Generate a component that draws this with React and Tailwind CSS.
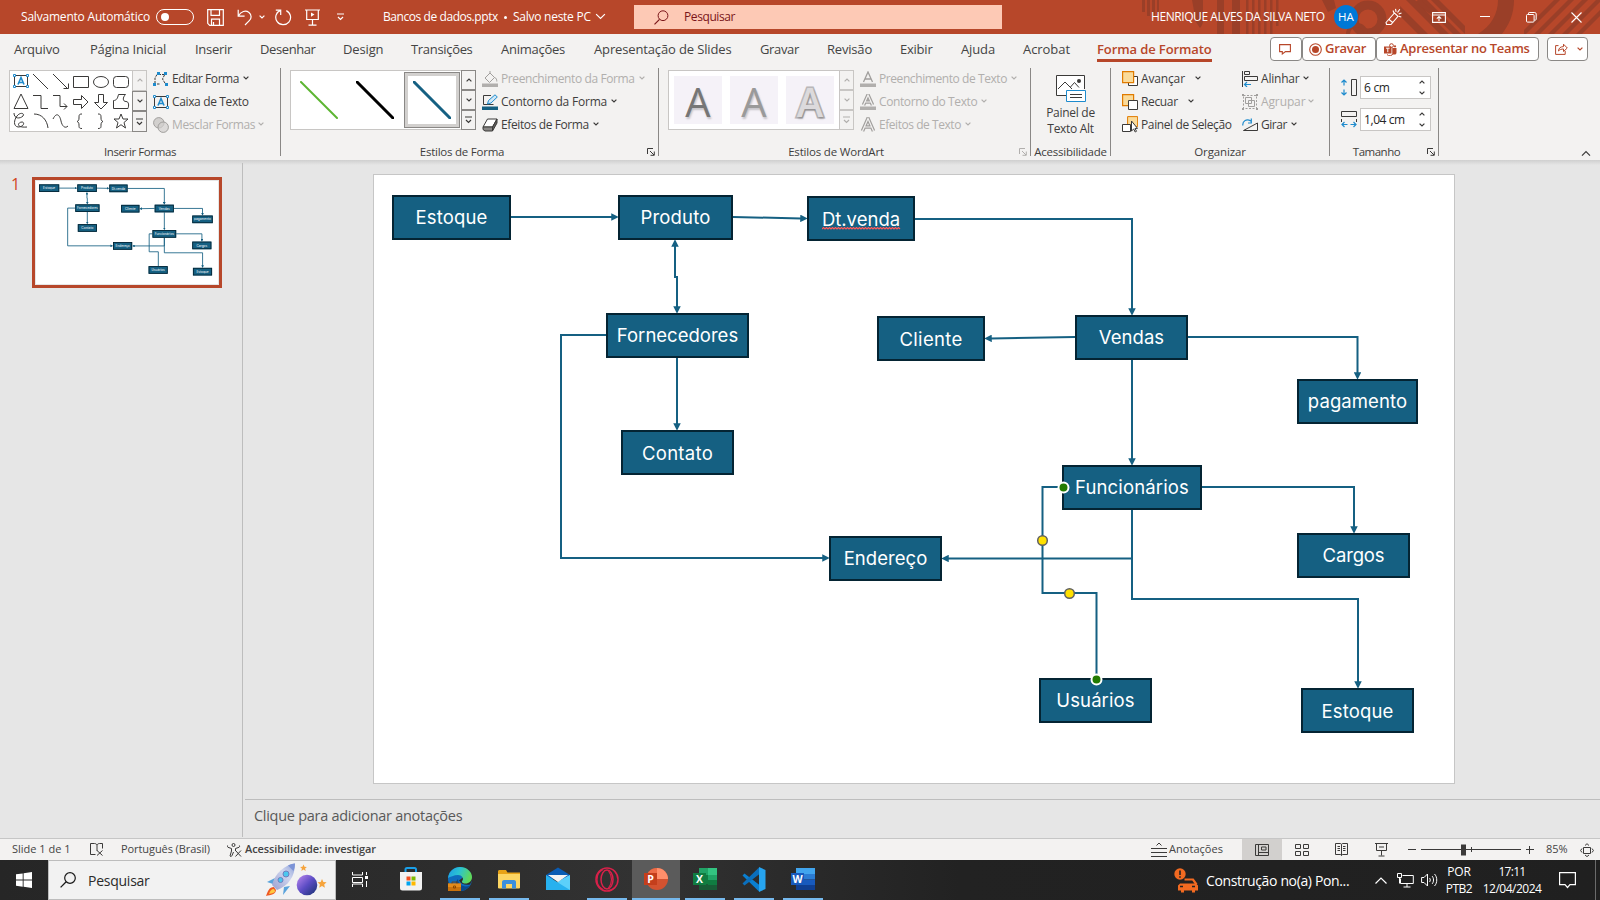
import React from 'react';

const INK = '#3b3a39';
const BLUE = '#1e8bcd';
const RED = '#b7472a';

function Svg({ w, h, vb, className = '', children }) {
  return (
    <svg width={w} height={h} viewBox={vb || `0 0 ${w} ${h}`} fill="none" className={`shrink-0 ${className}`}>
      {children}
    </svg>
  );
}

const Chevron = ({ color = INK, w = 6, up = false, className = '' }) => (
  <Svg w={w} h={w * 0.67} vb="0 0 6 4" className={className}>
    <path d={up ? 'M.6 3.4 3 1l2.4 2.4' : 'M.6.6 3 3 5.4.6'} stroke={color} strokeWidth={7.2 / w} />
  </Svg>
);

/* ---------- Title bar ---------- */

const TitleArt = () => (
  <Svg w={480} h={34}>
    <g fill="#9a3f28">
      <path d="M22 0h3v12h-3zM27 0h3v16h-3zM32 0h3v17h-3zM37 0h2v14h-2z" />
      <path d="M97 0h7v34h-7zM72 0h11v20a11 11 0 0 1-3 8l-4-6z" />
      <path d="M112 0h8v34h-8zM126 0h2.500v34h-2.500zM132 0h2.500v34h-2.500zM138 0h2.500v34h-2.500zM144 0h2.500v34h-2.500zM150 0h2.500v34h-2.500zM156 0h2.500v26h-2.500z" />
      <path d="M202 0h12l2 8-8 4zM286 0h9l34 34h-9zM299 0h8l34 34h-8zM311 0h8l26 26v8zM280 6l28 28h-10l-18-18z" />
      <path d="M378 0h16c0 14-5 25-12 34h-24c13-8 20-20 20-34z" />
      <path d="M404 30l30-30h6l-34 34h-2zM414 34l34-34h6l-34 34zM428 34l34-34h6l-34 34zM442 34l34-34h4v2l-32 32zM456 34l24-24v6l-18 18z" />
    </g>
    <circle cx="248" cy="19" r="14" stroke="#9a3f28" strokeWidth="9" />
    <circle cx="237" cy="34" r="9" stroke="#9a3f28" strokeWidth="4" />
    <path d="M298 0a44 44 0 0 0 18 14" stroke="#9a3f28" strokeWidth="5" />
  </Svg>
);

const TitleBar = () => (
  <header className="relative flex h-[34px] shrink-0 items-center bg-[#b7472a] text-[12px] text-white">
    <div className="absolute right-0 top-0"><TitleArt /></div>
    <span className="relative ml-[21px] w-[135px] tracking-[-0.2px]">Salvamento Automático</span>
    <div className="relative flex h-4 w-[38px] items-center rounded-full border border-white pl-[4px]">
      <div className="h-2 w-2 rounded-full bg-white" />
    </div>
    <Svg w={17} h={17} className="relative ml-[13px] mt-px">
      <path d="M.7.7h15.600v15.600H2.700L.7 14.300zM4 .7v5.600h8.500V.7M4.500 16.200v-6h8v6M6.500 16v-3" stroke="#fff" strokeWidth="1.200" />
    </Svg>
    <Svg w={16} h={17} className="relative ml-[13px]">
      <path d="M1.200.8v6.400h6.400M1.300 7C4 2.500 8.500.800 12 3.500c3 2.500 2.500 6 .3 8.200L8 16" stroke="#fff" strokeWidth="1.200" />
    </Svg>
    <Chevron color="#fff" className="relative ml-[6px]" />
    <Svg w={17} h={17} className="relative ml-[10px]">
      <path d="M.8 1.200h4.900V6M5.500 1.400A7.400 7.400 0 1 0 11.300 1.600" stroke="#fff" strokeWidth="1.200" />
    </Svg>
    <Svg w={15} h={17} className="relative ml-[13px]">
      <path d="M0 1h15M1.700 1v9.500h11.600V1M7.500 10.500V16M3.500 16.200h8" stroke="#fff" strokeWidth="1.200" />
      <path d="M6 3.500v4.300L9.500 5.600z" fill="#fff" />
    </Svg>
    <Svg w={7} h={8} className="relative ml-[17px]">
      <path d="M0 1h7M1 4l2.500 2.500L6 4" stroke="#fff" strokeWidth="1.200" />
    </Svg>
    <span className="ml-[39px] w-[121px] tracking-[-0.43px]">Bancos de dados.pptx</span>
    <span className="h-[3px] w-[3px] rounded-full bg-white" />
    <span className="ml-[6px] w-[82px] tracking-[-0.26px]">Salvo neste PC</span>
    <Chevron color="#fff" w={11} />
    <div className="ml-[28px] flex h-6 w-[368px] items-center bg-[#fdc9b5] text-[#7a1519]">
      <Svg w={15} h={15} className="ml-5">
        <circle cx="9" cy="5.700" r="4.900" stroke="#7a1519" /><path d="M5.500 9.300.5 14.300" stroke="#7a1519" strokeWidth="1.200" />
      </Svg>
      <span className="ml-[15px] tracking-[-0.41px]">Pesquisar</span>
    </div>
    <span className="relative ml-[149px] w-[183px] whitespace-nowrap tracking-[-0.43px]">HENRIQUE ALVES DA SILVA NETO</span>
    <span className="relative flex h-6 w-6 items-center justify-center rounded-full bg-[#0078d7] text-[11.5px]">HA</span>
    <Svg w={17} h={18} className="relative ml-[27px]">
      <path d="M1 14.500 9.500 5l3.500 3.300L6 16.500H1.500zM4 11.500l4 3.200M8 2.500 9 5M10.500.8l.6 3M14.800 1.200 12.500 4.500M16.500 5l-2.800 1M16.300 9l-2.500-.8" stroke="#fff" strokeWidth="1.100" />
    </Svg>
    <Svg w={14} h={11} className="relative ml-[30px]">
      <path d="M.6.6h12.800v9.800H.6zM.6 3h12.800M7 9V4.800M4.800 6.700 7 4.600l2.200 2.100" stroke="#fff" strokeWidth="1.100" />
    </Svg>
    <Svg w={10} h={2} className="relative ml-[34px]"><path d="M0 .5h10" stroke="#fff" /></Svg>
    <Svg w={11} h={11} className="relative ml-[36px]">
      <rect x=".5" y="2.500" width="7.600" height="7.600" rx="1" stroke="#fff" /><path d="M2.500 2.300V1.200c0-.4.300-.7.700-.7h5.600c.8 0 1.400.6 1.400 1.400v5.400c0 .5-.3.800-.8.800H8.300" stroke="#fff" />
    </Svg>
    <Svg w={11} h={11} className="relative ml-[34px]"><path d="m.5.5 10 10M10.500.5l-10 10" stroke="#fff" strokeWidth="1.100" /></Svg>
  </header>
);

/* ---------- Tabs ---------- */

const TABS = [
  ['Arquivo', 'ml-[14px] w-[76px] tracking-[-0.22px]'],
  ['Página Inicial', 'w-[105px] tracking-[-0.2px]'],
  ['Inserir', 'w-[65px] tracking-[-0.29px]'],
  ['Desenhar', 'w-[83px] tracking-[-0.4px]'],
  ['Design', 'w-[68px] tracking-[-0.13px]'],
  ['Transições', 'w-[90px] tracking-[-0.32px]'],
  ['Animações', 'w-[93px] tracking-[-0.25px]'],
  ['Apresentação de Slides', 'w-[166px] tracking-[-0.14px]'],
  ['Gravar', 'w-[67px] tracking-[-0.34px]'],
  ['Revisão', 'w-[73px] tracking-[-0.19px]'],
  ['Exibir', 'w-[61px] tracking-[-0.23px]'],
  ['Ajuda', 'w-[62px] tracking-[-0.13px]'],
  ['Acrobat', 'w-[74px] tracking-[-0.06px]'],
];

const PILL = 'flex h-6 items-center rounded-[4px] border border-[#8a8886] bg-white';

const TabBar = () => (
  <nav className="flex h-7 shrink-0 items-center bg-[#f3f2f1] text-[13px] text-[#444]">
    {TABS.map(([t, c]) => (
      <span key={t} className={`mt-[3px] shrink-0 whitespace-nowrap ${c}`}>{t}</span>
    ))}
    <span className="mt-[3px] flex h-[25px] w-[115px] shrink-0 items-center whitespace-nowrap border-b-[3px] border-[#b7472a] pt-[3px] font-semibold tracking-[-0.1px] text-[#b7472a]">Forma de Formato</span>
    <div className="ml-[58px] mt-[2px] flex text-[13px] font-semibold text-[#b7472a]">
      <div className={`${PILL} w-8 pl-[8px]`}>
        <Svg w={12} h={11}><path d="M.6.6h10.800v7H6.500L3.300 10V7.600H.6z" stroke={RED} strokeWidth="1.100" /></Svg>
      </div>
      <div className={`${PILL} w-[74px] pl-[6px]`}>
        <Svg w={13} h={13}><circle cx="6.500" cy="6.500" r="5.800" stroke={RED} strokeWidth="1.100" /><circle cx="6.500" cy="6.500" r="3.500" fill={RED} /></Svg>
        <span className="ml-[3px] tracking-[-0.28px]">Gravar</span>
      </div>
      <div className={`${PILL} w-[163px] pl-[7px]`}>
        <Svg w={13} h={13}>
          <circle cx="7.500" cy="2.600" r="1.900" stroke={RED} /><circle cx="11" cy="3.300" r="1.100" fill={RED} />
          <path d="M0 3.500h7.500v7H0zM8.500 5h4v4.500a2 2 0 0 1-2.500 2H8.500z" fill={RED} /><path d="M2 5.200h3.600M3.800 5.200v4" stroke="#fff" /><path d="M3 11.500a3.500 3.500 0 0 0 6-1V5" stroke={RED} />
        </Svg>
        <span className="ml-[3px] whitespace-nowrap tracking-[-0.24px]">Apresentar no Teams</span>
      </div>
      <div className={`${PILL} ml-[8px] w-[41px] pl-[7px]`}>
        <Svg w={13} h={12}><path d="M3.500 2.600H.6v8.800h9.600V8M3.500 8c.2-3 2-4.300 5-4.400V1.200L12.300 5 8.500 8.500V6C6.500 6 4.800 6.500 3.500 8z" stroke={RED} /></Svg>
        <Chevron color={RED} className="ml-[9px]" />
      </div>
    </div>
  </nav>
);

/* ---------- Ribbon ---------- */

const Item = ({ icon, label, className = '', chevron = 'ml-[4px]', dim, gap = 'ml-[3px]' }) => (
  <div className={`flex h-[23px] items-center whitespace-nowrap ${dim ? 'text-[#b1afad]' : ''}`}>
    {icon}
    <span className={`${gap} ${className}`}>{label}</span>
    {chevron && <Chevron color={dim ? '#b1afad' : INK} className={chevron} />}
  </div>
);

const Launcher = ({ dim }) => (
  <Svg w={8} h={8} className="ml-[4px] mr-[3px]">
    <path d="M.5 6V.5H6M3 3l4 4M7.300 3.500v3.800H3.500" stroke={dim ? '#b1afad' : INK} />
  </Svg>
);

const Group = ({ width, label, track, launcher, children }) => (
  <>
    <section className={`flex shrink-0 flex-col ${width}`}>
      <div className="flex h-[82px]">{children}</div>
      <div className="flex h-4 items-center text-[11.5px]">
        <span className={`flex-1 whitespace-nowrap text-center ${track}`}>{label}</span>
        {launcher && <Launcher dim={launcher === 'dim'} />}
      </div>
    </section>
    <div className="mt-[6px] h-[88px] w-px shrink-0 bg-[#8a8886]" />
  </>
);

const Scroller = ({ dim, firstDim, h = 'h-[62px]' }) => {
  const color = dim ? '#b1afad' : INK;
  const line = dim ? 'border-[#c8c6c4]' : 'border-[#8a8886]';
  return (
    <div className={`flex w-[15px] shrink-0 flex-col bg-[#f3f2f1] ${h}`}>
      <div className={`flex flex-1 items-center justify-center border ${firstDim ? 'border-[#c8c6c4]' : line}`}><Chevron up color={firstDim ? '#b1afad' : color} /></div>
      <div className={`flex flex-1 items-center justify-center border ${line}`}><Chevron color={color} /></div>
      <div className={`flex flex-1 items-center justify-center border ${line}`}>
        <Svg w={7} h={8}><path d="M0 1h7M1 4l2.500 2.500L6 4" stroke={color} strokeWidth="1.200" /></Svg>
      </div>
    </div>
  );
};

const ShapeGallery = () => (
  <div className="ml-[9px] mt-[8px] flex h-[62px] w-[138px] bg-white">
    <div className="h-full w-[123px] border border-r-0 border-[#c8c6c4]">
      <Svg w={122} h={60}>
        <g stroke={INK} strokeWidth="1">
          <path d="M4.500 4.500h13v11h-13z" />
          <path d="m23 3 15 15M43 3l14 14M58.500 12.500v5h-5" />
          <path d="M63.500 5.500h15v11h-15z" />
          <ellipse cx="91" cy="11" rx="7.500" ry="5.500" />
          <rect x="103.500" y="5.500" width="15" height="11" rx="3" />
          <path d="M4 37.500 11 23l7 14.500zM23 24.500h8v13h7M43 24.500h7v11h7M54 32.500l3 3-3 3" />
          <path d="M63.500 28.500h8v-4l6.500 6.500-6.500 6.500v-4h-8zM88.500 23.500h5v8h4L91 38l-6.500-6.500h4z" />
          <path d="M103.500 37.500v-8c3 0 4-2 5-6h7c-3 3-3 7 .5 7 3 0 3 4 2 7z" />
          <path d="M4 42c0 6 6 6 9 3 2-3-3-4-6 0s-4 10 1 11c6 0 7-5 4-5-4 0-7 6 5 5M24 43c8 0 13 6 14 14M43 48c4-8 7-3 8 2s4 8 7 5" />
          <path d="M72 43c-3 0-3 1-3 4 0 2-.5 3-2 3.500 1.500.5 2 1.500 2 3.500 0 2.500 0 3.500 3 3.500M88 43c3 0 3 1 3 4 0 2 .5 3 2 3.500-1.500.5-2 1.500-2 3.500 0 2.500 0 3.500-3 3.500" />
          <path d="m111 43 2 5h5l-4 3.500 1.500 5.500-4.500-3.300-4.500 3.300 1.500-5.500-4-3.500h5z" />
        </g>
        <g fill="#fff" stroke={BLUE}><path d="M3.500 3.500h2v2h-2zM16.500 3.500h2v2h-2zM3.500 14.500h2v2h-2zM16.500 14.500h2v2h-2z" /></g>
        <path d="m8 13.500 3-7 3 7M9 11.500h4" stroke={BLUE} strokeWidth="1.600" />
      </Svg>
    </div>
    <Scroller firstDim />
  </div>
);

const EditShapeIcon = () => (
  <Svg w={16} h={14}>
    <path d="M4 2.500 2 6v5M5.500 2.500h6M11.500 3l-2 4 3 5M4 12h3" stroke={INK} strokeDasharray="2.500 1" />
    <path d="M4 0h3v3H4zM11 0h3v3h-3zM0 11h3v3H0zM12 11h3v3h-3z" fill={BLUE} />
  </Svg>
);
const TextBoxIcon = () => (
  <Svg w={16} h={14}>
    <path d="M1.500 1.500h13v11h-13z" stroke={INK} />
    <g fill="#fff" stroke={BLUE}><path d="M.5.5h2v2h-2zM13.500.5h2v2h-2zM.5 11.500h2v2h-2zM13.500 11.500h2v2h-2z" /></g>
    <path d="m5 10.500 3-7 3 7M6 8.500h4" stroke={BLUE} strokeWidth="1.600" />
  </Svg>
);
const MergeIcon = () => (
  <Svg w={16} h={16}>
    <circle cx="5.800" cy="5.800" r="5.200" stroke="#a19f9d" fill="#d2d0ce" /><circle cx="10.200" cy="10.200" r="5.200" stroke="#a19f9d" fill="#d2d0ce" fillOpacity=".7" />
  </Svg>
);
const FillIcon = () => (
  <Svg w={16} h={16}>
    <path d="m8 2-5 5 4.500 4.500 5-5zM8 2V0M12.500 6.500c2 .5 2.300 2.500 2.300 4" stroke="#a19f9d" /><path d="M0 12.500h16V16H0z" fill="#b1afad" />
  </Svg>
);
const OutlineIcon = () => (
  <Svg w={16} h={16}>
    <path d="M9 1.500H1.500v9h10" stroke={INK} /><path d="m5.500 10 1-3.500L13 .8l2.300 2.200L9 9z" fill="#cfe7f7" stroke={BLUE} /><path d="M0 12.500h16V16H0z" fill="#156082" />
  </Svg>
);
const EffectsIcon = () => (
  <Svg w={16} h={14}>
    <path d="m1 9 4.500-8H15l-4.500 8z" fill="#fff" stroke={INK} /><path d="M1 9v2.500L3 13h7.500V9z" fill="#8a8886" stroke={INK} /><path d="M10.500 13 15 5V1l-4.500 8z" fill="#605e5c" stroke={INK} />
  </Svg>
);

const LINE_STYLES = [
  ['#5cb531', 2, false],
  ['#000', 3, false],
  ['#156082', 3, true],
];

const ShapeStyleGallery = () => (
  <div className="ml-[9px] mt-[8px] flex h-[60px] w-[186px]">
    <div className="flex h-full w-[171px] items-center border border-r-0 border-[#c8c6c4] bg-white">
      {LINE_STYLES.map(([c, w, sel]) => (
        <div key={c} className={`flex h-[56px] w-14 shrink-0 items-center justify-center ${sel ? 'ml-px border border-[#8a8886] bg-[#d2d0ce]' : ''}`}>
          <div className="flex h-12 w-12 items-center justify-center bg-white">
            <Svg w={38} h={38}><path d="m1 1 36 36" stroke={c} strokeWidth={w} strokeLinecap="round" /></Svg>
          </div>
        </div>
      ))}
    </div>
    <Scroller h="h-[60px]" />
  </div>
);

const WORD_ART = [
  'font-medium text-[#767676]',
  'font-medium text-[#9a9a9a]',
  'font-semibold text-[#dcdadc] [-webkit-text-stroke:3px_#b9b7b9] [paint-order:stroke_fill]',
];

const WordArtGallery = () => (
  <div className="ml-[9px] mt-[8px] flex h-[60px] w-[186px]">
    <div className="flex h-full w-[171px] items-center gap-2 border border-r-0 border-[#c8c6c4] bg-white pl-[5px]">
      {WORD_ART.map((c) => (
        <div key={c} className="flex h-12 w-12 items-center justify-center bg-[#f5f2f8]">
          <span className={`mt-[4px] text-[40px] leading-none [text-shadow:1px_2px_2px_#0003] ${c}`}>A</span>
        </div>
      ))}
    </div>
    <Scroller dim firstDim h="h-[60px]" />
  </div>
);

const TextFillIcon = ({ outline, bar }) => (
  <Svg w={16} h={16}>
    <path d={bar ? 'M3.500 11 8 1l4.500 10M5 8h6' : 'M2.500 14 8 1.500 13.500 14M4.500 10h7'} stroke="#a19f9d" strokeWidth={outline ? 3.6 : 1.3} />
    {outline && <path d={bar ? 'M3.500 11 8 1l4.500 10M5 8h6' : 'M2.500 14 8 1.500 13.500 14M4.500 10h7'} stroke="#f3f2f1" strokeWidth="1.200" />}
    {bar && <path d="M0 12.500h16V16H0z" fill="#b1afad" />}
  </Svg>
);

const ForwardIcon = () => (
  <Svg w={16} h={16}><path d="M6.500 5.500h9v9h-9z" fill="#fff" stroke={INK} /><path d="M.6.600h11v11h-11z" fill="#fadb9a" stroke="#e07b00" strokeWidth="1.200" /></Svg>
);
const BackwardIcon = () => (
  <Svg w={16} h={16}><path d="M.6.600h11v11h-11z" fill="#fadb9a" stroke="#e07b00" strokeWidth="1.200" /><path d="M6.500 6.500h9v9h-9z" fill="#fff" stroke={INK} /></Svg>
);
const SelectionIcon = () => (
  <Svg w={16} h={17}>
    <path d="M5.600.600h10v10h-10z" fill="#fadb9a" stroke="#e07b00" /><path d="M.5 8.500h8v7h-8z" fill="#fff" stroke={INK} /><path d="M9.500 5v10l2.200-2 1.500 3 1.300-.7-1.500-2.900h2.500z" fill="#fff" stroke={INK} />
  </Svg>
);
const AlignIcon = () => (
  <Svg w={16} h={16}>
    <path d="M.5 0v16M2.500.5h5v3h-5zM2.500 5.500h13v4h-13z" stroke={INK} fill="none" /><path d="M9 13.500H2.500M5 11l-2.500 2.500L5 16" stroke={BLUE} strokeWidth="1.200" />
  </Svg>
);
const GroupIcon = () => (
  <Svg w={16} h={16}>
    <path d="M1.500 1.500h13v13h-13z" stroke="#a19f9d" strokeDasharray="2 1.500" /><path d="M3.500 3.500h6v6h-6zM6.500 6.500h6v6h-6z" stroke="#a19f9d" /><path d="M0 0h2v2H0zM14 0h2v2h-2zM0 14h2v2H0zM14 14h2v2h-2z" fill="#a19f9d" />
  </Svg>
);
const RotateIcon = () => (
  <Svg w={16} h={15}>
    <path d="M1.500 13.500h14V6z" stroke={INK} /><path d="M.8 8.500c-.5-5 4-7 8-4.500M6 6h3.300V1.500" stroke={BLUE} strokeWidth="1.200" />
  </Svg>
);

const SizeField = ({ icon, value, track }) => (
  <div className="flex items-center">
    {icon}
    <div className="ml-[3px] flex h-[23px] w-[71px] items-center border border-[#c8c6c4] bg-white pl-[3px] pr-[5px] text-[#262626]">
      <span className={`flex-1 ${track}`}>{value}</span>
      <div className="flex flex-col gap-[6px]"><Chevron up w={6} /><Chevron w={6} /></div>
    </div>
  </div>
);

const Ribbon = () => (
  <div className="flex h-[98px] shrink-0 bg-[#f3f2f1] text-[12px] text-[#3f3e3d]">
    <Group width="w-[280px]" label="Inserir Formas" track="tracking-[-0.4px]">
      <ShapeGallery />
      <div className="ml-[6px] mt-[5px]">
        <Item icon={<EditShapeIcon />} label="Editar Forma" className="tracking-[-0.42px]" />
        <Item icon={<TextBoxIcon />} label="Caixa de Texto" className="tracking-[-0.36px]" chevron={null} />
        <Item icon={<MergeIcon />} label="Mesclar Formas" className="tracking-[-0.38px]" chevron="ml-[3px]" dim />
      </div>
    </Group>
    <Group width="w-[377px]" label="Estilos de Forma" track="tracking-[-0.24px]" launcher>
      <ShapeStyleGallery />
      <div className="ml-[6px] mt-[5px]">
        <Item icon={<FillIcon />} label="Preenchimento da Forma" className="tracking-[-0.39px]" dim />
        <Item icon={<OutlineIcon />} label="Contorno da Forma" className="tracking-[-0.2px]" />
        <Item icon={<EffectsIcon />} label="Efeitos de Forma" className="tracking-[-0.39px]" />
      </div>
    </Group>
    <Group width="w-[371px]" label="Estilos de WordArt" track="tracking-[-0.18px] pr-[2px]" launcher="dim">
      <WordArtGallery />
      <div className="ml-[6px] mt-[5px]">
        <Item icon={<TextFillIcon bar />} label="Preenchimento de Texto" className="tracking-[-0.42px]" dim />
        <Item icon={<TextFillIcon bar outline />} label="Contorno do Texto" className="tracking-[-0.4px]" dim />
        <Item icon={<TextFillIcon outline />} label="Efeitos de Texto" className="tracking-[-0.45px]" dim />
      </div>
    </Group>
    <Group width="w-[79px]" label="Acessibilidade" track="tracking-[-0.22px]">
      <div className="flex w-full flex-col items-center">
        <Svg w={30} h={27} className="mt-[13px]">
          <path d="M10.500 20.500H.500V.500h28V14" fill="#fff" stroke={INK} /><path d="m2 14 7-7 7 7M14.500 12l4-4.500 4.500 5" stroke={INK} fill="none" /><circle cx="23" cy="6" r="2" fill={INK} />
          <path d="M10.500 15.500h19v11h-19z" fill="#fff" stroke={BLUE} /><path d="M14 19.500h12M14 22.500h12" stroke={INK} />
        </Svg>
        <span className="mt-[3px] h-4 leading-4 tracking-[-0.28px]">Painel de</span>
        <span className="h-4 leading-4 tracking-[-0.32px]">Texto Alt</span>
      </div>
    </Group>
    <Group width="w-[218px]" label="Organizar" track="tracking-[-0.15px]">
      <div className="ml-[11px] mt-[5px] w-[120px]">
        <Item icon={<ForwardIcon />} label="Avançar" className="tracking-[-0.15px]" chevron="ml-[10px]" />
        <Item icon={<BackwardIcon />} label="Recuar" className="tracking-[-0.35px]" chevron="ml-[10px]" />
        <Item icon={<SelectionIcon />} label="Painel de Seleção" className="tracking-[-0.38px]" chevron={null} />
      </div>
      <div className="mt-[5px]">
        <Item icon={<AlignIcon />} label="Alinhar" className="tracking-[-0.2px]" chevron="ml-[3px]" />
        <Item icon={<GroupIcon />} label="Agrupar" className="tracking-[-0.12px]" chevron="ml-[3px]" dim />
        <Item icon={<RotateIcon />} label="Girar" className="tracking-[-0.48px]" />
      </div>
    </Group>
    <Group width="w-[108px]" label="Tamanho" track="tracking-[-0.5px]" launcher>
      <div className="ml-[11px] mt-[14px] flex flex-col gap-[9px]">
        <SizeField value="6 cm" track="tracking-[-0.3px]" icon={
          <Svg w={16} h={17}><path d="M10.500.5h5v16h-5z" stroke={INK} /><path d="M3 1v5.500M3 10.500V16M.5 3.500 3 1l2.500 2.500M.5 13.500 3 16l2.500-2.500" stroke={BLUE} strokeWidth="1.200" /></Svg>} />
        <SizeField value="1,04 cm" track="tracking-[-0.42px]" icon={
          <Svg w={16} h={17}><path d="M.5.500h15v5H.500zM.5 8v3M15.500 8v3" stroke={INK} /><path d="M6.500 13.500H1M9.500 13.500H15M3.500 11 1 13.500 3.500 16M12.500 11l2.500 2.500-2.500 2.500" stroke={BLUE} strokeWidth="1.200" /></Svg>} />
      </div>
    </Group>
    <div className="flex flex-1 items-end justify-end pb-[3px] pr-[9px]"><Chevron up w={10} /></div>
  </div>
);

/* ---------- Diagram ---------- */

const NODES = [
  ['Estoque', 'left-[18px] top-[20px] w-[119px] tracking-[0.15px]'],
  ['Produto', 'left-[244px] top-[20px] w-[115px] tracking-[0.18px]'],
  ['Dt.venda', 'left-[433px] top-[21px] w-[108px] pt-[2px]'],
  ['Fornecedores', 'left-[232px] top-[138px] w-[143px] tracking-[0.01px]'],
  ['Cliente', 'left-[503px] top-[141px] w-[108px] pt-[2px] tracking-[0.3px]'],
  ['Vendas', 'left-[701px] top-[140px] w-[113px] tracking-[0.05px]'],
  ['Contato', 'left-[247px] top-[255px] w-[113px] pt-[2px] tracking-[0.3px]'],
  ['pagamento', 'left-[923px] top-[204px] w-[121px] tracking-[0.1px]'],
  ['Funcionários', 'left-[688px] top-[290px] w-[140px] tracking-[0.15px]'],
  ['Endereço', 'left-[455px] top-[361px] w-[113px] tracking-[0.05px]'],
  ['Cargos', 'left-[923px] top-[358px] w-[113px] tracking-[-0.15px]'],
  ['Usuários', 'left-[665px] top-[503px] w-[113px] tracking-[0.1px]'],
  ['Estoque', 'left-[927px] top-[513px] w-[113px] pt-[2px] tracking-[0.15px]'],
];

const ARROWS = [
  'M511 217H612',
  'M733 217L801 218.400',
  'M915 219H1132V309',
  'M1075 337L991 338.400',
  'M1188 337H1357.500V373',
  'M1132 360V459',
  'M677 358V424',
  'M606 335H561V558H823',
  'M1132 510V558.500H948',
  'M1132 510V599H1358V682',
  'M1202 487H1354V527',
];

const Diagram = ({ editing }) => {
  const head = editing ? 'head' : 'head-small';
  const size = editing ? 7.5 : 16;
  return (
    <div className="relative h-[608px] w-[1080px] bg-white">
      <svg viewBox="374 175 1080 608" className="absolute inset-0 h-full w-full" fill="none" stroke="#156082" strokeWidth={editing ? 2 : 5}>
        <defs>
          <marker id={head} viewBox="0 0 6 6" refX={editing ? 0.6 : 3.5} refY="3" markerWidth={size} markerHeight={size} markerUnits="userSpaceOnUse" orient="auto-start-reverse">
            <path d="M0 0 6 3 0 6z" fill="#156082" stroke="none" />
          </marker>
        </defs>
        {ARROWS.map((d) => <path key={d} d={d} markerEnd={`url(#${head})`} />)}
        <path d="M675 246V277H677V307" markerStart={`url(#${head})`} markerEnd={`url(#${head})`} />
        <path d="M1062 487H1042.500V593H1096.500V678" />
      </svg>
      {NODES.map(([t, c]) => (
        <div key={c} className={`absolute flex h-[45px] items-center justify-center border-[#042433] bg-[#156082] font-[Inter] text-[18.5px] leading-none text-white ${editing ? 'border-2' : 'border-[5px]'} ${c}`}>
          <span className={t === 'Dt.venda' && editing ? 'relative' : ''}>
            {t}
            {t === 'Dt.venda' && editing && (
              <svg width="79" height="3" viewBox="0 0 79 3" className="absolute left-0 top-[17px]" fill="none">
                <path d={'M0 2' + 'l1.500-1.500 1.500 1.500'.repeat(26)} stroke="#ff5a5a" strokeWidth="1.200" />
              </svg>
            )}
          </span>
        </div>
      ))}
      {editing && (
        <svg viewBox="374 175 1080 608" className="absolute inset-0 h-full w-full">
          <g fill="#237b00" stroke="#fff" strokeWidth="2"><circle cx="1063.500" cy="487.500" r="5" /><circle cx="1096.500" cy="679.500" r="5" /></g>
          <g fill="#ffe100" stroke="#606060" strokeWidth="1.500"><circle cx="1042.500" cy="540.500" r="4.800" /><circle cx="1069.500" cy="593.500" r="4.800" /></g>
        </svg>
      )}
    </div>
  );
};

const Workspace = () => (
  <div className="flex h-[678px] shrink-0 bg-[#e6e6e6] bg-[linear-gradient(#cfcfcf,#e6e6e6_5px)]">
    <aside className="flex w-[242px] shrink-0 pt-[17px]">
      <span className="w-8 pl-[11px] text-[16px] leading-[15px] text-[#d24726]">1</span>
      <div className="h-[111px] w-[190px] border-[3px] border-[#b7472a] bg-[#e6e6e6] p-px">
        <div className="h-[103px] w-[182px] overflow-hidden bg-white">
          <div className="origin-top-left scale-[0.1693]"><Diagram /></div>
        </div>
      </div>
    </aside>
    <div className="mt-[3px] h-[674px] w-px bg-[#bdbdbd]" />
    <main className="flex flex-1 flex-col pl-[2px]">
      <div className="h-[640px] border-b border-[#bdbdbd] pl-[128px] pt-[14px]">
        <div className="w-[1082px] border border-[#c6c6c6]"><Diagram editing /></div>
      </div>
      <div className="flex flex-1 items-center pl-[9px] pb-[6px] text-[14.5px] tracking-[-0.28px] text-[#595959]">Clique para adicionar anotações</div>
    </main>
  </div>
);

/* ---------- Status bar ---------- */

const StatusBar = () => (
  <footer className="flex h-[22px] shrink-0 items-center border-t border-[#c6c6c6] bg-[#f3f2f1] text-[11px] text-[#444]">
    <span className="ml-3 w-[78px]">Slide 1 de 1</span>
    <Svg w={14} h={13}><path d="M5.500 11.500H.500V.500h4c1 0 2 .5 2.500 1.500V8M7 2c.5-1 1.500-1.500 2.500-1.500h3v5M7 7.500l5.500 5M12.500 7.500l-5.500 5" stroke={INK} /></Svg>
    <span className="ml-[17px] w-[106px] whitespace-nowrap tracking-[-0.08px]">Português (Brasil)</span>
    <Svg w={15} h={14}><circle cx="6.500" cy="2" r="1.500" stroke={INK} /><path d="M1 2.500c-.8 0-.8 1.500 0 1.800l3.500 1.200V8L3 13c.8 1 1.500.5 2-.5L6.500 9M12 2.500c.8 0 .8 1.500 0 1.800L8.500 5.500V8M8.500 7.500l5.500 6M14 7.500l-5.500 6" stroke={INK} /></Svg>
    <span className="ml-[3px] whitespace-nowrap font-semibold tracking-[-0.1px]">Acessibilidade: investigar</span>
    <div className="ml-auto flex h-full items-center">
      <Svg w={16} h={16}><path d="M0 6.500h16M0 10.500h16M0 14.500h16M5.500 3.500 8 1l2.500 2.500" stroke={INK} /></Svg>
      <span className="ml-[2px] w-[73px] tracking-[0.04px]">Anotações</span>
      <span className="flex h-full w-10 items-center justify-center bg-[#d2d0ce]">
        <Svg w={14} h={12}><path d="M.5.500h13v11H.500zM3.500.500v11M3.500 8.500h10M6.500 3h4.500v3H6.500z" stroke={INK} /></Svg>
      </span>
      <Svg w={14} h={12} className="ml-[13px]"><path d="M.5.500h5v4h-5zM8.500.500h5v4h-5zM.5 7.500h5v4h-5zM8.500 7.500h5v4h-5z" stroke={INK} /></Svg>
      <Svg w={13} h={13} className="ml-[26px]"><path d="M6.500 1.500v11M.5.500h4.500c1 0 1.500.5 1.500 1 0-.5.500-1 1.500-1h4.500v11H8c-1 0-1.500.5-1.500 1 0-.5-.5-1-1.500-1H.500zM2.500 3.500h2.500M2.500 5.500h2.500M2.500 7.500h2.500M8 3.500h2.500M8 5.500h2.500M8 7.500h2.500" stroke={INK} /></Svg>
      <Svg w={13} h={14} className="ml-[27px]"><path d="M0 .500h13M1.500.500v7h10v-7M4 4h5M6.500 7.500v5M3.500 13h6" stroke={INK} /></Svg>
      <Svg w={8} h={2} className="ml-[20px]"><path d="M0 .5h8" stroke={INK} /></Svg>
      <Svg w={100} h={12} className="ml-[5px]"><path d="M0 5.500h100M50.500 3v5" stroke={INK} /><path d="M40 0.500h5v11h-5z" fill={INK} /></Svg>
      <Svg w={8} h={8} className="ml-[5px]"><path d="M0 3.500h8M3.500 0v8" stroke={INK} /></Svg>
      <span className="ml-[12px] w-[34px]">85%</span>
      <Svg w={14} h={14} className="mr-[6px]"><path d="M3.500 4.500h7v6h-7zM5 2.500 7 .700l2 1.800M5 12 7 13.600 9 12M2 5.500.600 7.500 2 9.500M12 5.500l1.400 2-1.400 2" stroke={INK} /></Svg>
    </div>
  </footer>
);

/* ---------- Taskbar ---------- */

const TaskButton = ({ open, active, children }) => (
  <div className={`flex h-10 w-12 shrink-0 flex-col items-center ${active ? 'bg-[#5b5b5b]' : ''}`}>
    <div className="flex h-[38px] items-center justify-center">{children}</div>
    {open && <div className={`h-[2px] bg-[#76b9ed] ${active ? 'w-12' : 'w-10'}`} />}
  </div>
);

const OfficeTile = ({ tile, letter }) => (
  <>
    <path d="M0 6h13v12H0z" fill={tile} />
    <text x="6.500" y="15.800" fill="#fff" fontSize="10.500" fontWeight="700" textAnchor="middle" fontFamily="Open Sans, sans-serif">{letter}</text>
  </>
);

const SearchArt = () => (
  <Svg w={62} h={34} className="ml-auto mr-[8px]">
    <defs>
      <linearGradient id="rk" x1="0" y1="1" x2="1" y2="0"><stop offset="0" stopColor="#9a9fd0" /><stop offset=".6" stopColor="#cfd5ee" /><stop offset="1" stopColor="#8ba0d8" /></linearGradient>
      <linearGradient id="pl" x1="0" y1="0" x2="1" y2="1"><stop offset="0" stopColor="#c08af0" /><stop offset=".5" stopColor="#5b4cc4" /><stop offset="1" stopColor="#16306e" /></linearGradient>
    </defs>
    <path d="M9 24c-5 0-6 4-8 9 5-1 10-2 10-6z" fill="#ef5a24" /><path d="M9 26c-3 0-4 2-5 5 3-1 6-1 6-3z" fill="#ffc940" />
    <path d="m10 15-8 4 6 2zM19 24l-1 8 7-9zM24 11" fill="#5aa3dc" />
    <path d="M30 .500C20 2 10 10 7 22l5 5C23 23 30 14 30 .500z" fill="url(#rk)" />
    <path d="M30 .500c-3 .3-5 1-7 2L28.500 8c1-2.500 1.500-5 1.500-7.500z" fill="#7c93d6" />
    <circle cx="21" cy="11" r="3" fill="#4cc7ee" stroke="#6d7fc0" /><circle cx="15.500" cy="17" r="2.500" fill="#4cc7ee" stroke="#6d7fc0" />
    <circle cx="42" cy="22" r="10.300" fill="url(#pl)" />
    <g fill="#f6a43c"><path d="m38.500 1.500 1 2.200 2.400.2-1.800 1.600.6 2.400-2.200-1.300-2.100 1.300.5-2.400-1.800-1.600 2.400-.2zM57 16l1.400 3 3.200.3-2.400 2.200.7 3.200-2.900-1.700-2.800 1.700.7-3.200-2.400-2.200 3.200-.3z" /></g>
  </Svg>
);

const Taskbar = () => (
  <div className="flex h-10 shrink-0 items-center bg-[linear-gradient(90deg,#262626,#2c2c2c_25%,#323232_40%,#222_60%,#202020)] text-white">
    <Svg w={16} h={16} className="ml-4"><path d="M0 2.300 6.700 1.400V7.600H0zM7.600 1.200 16 0v7.600H7.600zM0 8.500h6.700v6.200L0 13.700zM7.600 8.500H16V16l-8.400-1.200z" fill="#fff" /></Svg>
    <div className="ml-4 flex h-10 w-[288px] items-center border border-[#bdbdbd] bg-[#f2f2f2] text-[14px] text-[#2b2b2b]">
      <Svg w={16} h={16} className="ml-[11px]"><circle cx="10" cy="6" r="5.300" stroke="#1a1a1a" strokeWidth="1.200" /><path d="M6.200 9.800.6 15.400" stroke="#1a1a1a" strokeWidth="1.300" /></Svg>
      <span className="ml-[12px] tracking-[-0.25px]">Pesquisar</span>
      <SearchArt />
    </div>
    <div className="ml-[2px] flex gap-px">
      <TaskButton><Svg w={16} h={15} className="mr-[4px]"><path d="M.5 0v3h10V0M.500 5.500h10v5H.500zM.500 15v-3h10v3M14.500 0v3M14.500 9v6" stroke="#fff" /><path d="M13 4h3v3h-3z" fill="#fff" /></Svg></TaskButton>
      <TaskButton>
        <Svg w={24} h={24}>
          <path d="M6.500 6V2.500C6.500 1.700 7.200 1 8 1h7.500c.8 0 1.500.7 1.500 1.500V6" stroke="#1a9fe8" strokeWidth="2" /><path d="M1 5h22v16a2.500 2.500 0 0 1-2.500 2.500h-17A2.500 2.500 0 0 1 1 21z" fill="#f2f2f2" />
          <path d="M7.500 9.500h4v4h-4z" fill="#f25022" /><path d="M12.500 9.500h4v4h-4z" fill="#7fba00" /><path d="M7.500 14.500h4v4h-4z" fill="#00a4ef" /><path d="M12.500 14.500h4v4h-4z" fill="#ffb900" />
        </Svg>
      </TaskButton>
      <TaskButton open>
        <Svg w={24} h={25}>
          <defs><linearGradient id="eg" x1="0" y1="0" x2="1" y2="0.300"><stop offset="0" stopColor="#1c9be6" /><stop offset=".5" stopColor="#2bc3d2" /><stop offset="1" stopColor="#5fd85b" /></linearGradient></defs>
          <circle cx="12" cy="12" r="12" fill="#0f6cbd" />
          <path d="M11 13.500C13 17 17 18.500 22 17.500L25 12 18 8z" fill="#2c2c2c" />
          <path d="M0 11C1 4 6 0 12 0c7 0 12 5 12 10 0 4-3 6.500-6.500 6.500-3 0-4.500-1.500-3-3 1.500-2-.5-5.500-4.500-5.500-4 0-8 2-10 3z" fill="url(#eg)" />
          <path d="M10 12c0 6 6 9 12 6.500C19 23 14 25 10 23.500 6 21 7 15 10 12z" fill="#0b4a8c" />
          <path d="M0 16.500h13V24H0z" fill="#c9720c" /><path d="M0 16.500h13v3.500H0z" fill="#e38b1a" /><path d="M4 16.500v-1.500h5v1.500M5.500 19h2v2h-2z" stroke="#7a3e00" strokeWidth=".8" />
        </Svg>
      </TaskButton>
      <TaskButton open>
        <Svg w={22} h={19}>
          <path d="M0 1.500C0 .700.600 0 1.500 0H8l1.500 2.500H22V17a1 1 0 0 1-1 1H0z" fill="#e8a317" /><path d="M0 4h22v13.500a1 1 0 0 1-1 1H1a1 1 0 0 1-1-1z" fill="#fdd663" /><path d="M4 18.500V12c0-1.200 1-2 2-2h10c1 0 2 .8 2 2v6.500h-4V14H8v4.500z" fill="#3b8fdd" />
        </Svg>
      </TaskButton>
      <TaskButton>
        <Svg w={24} h={24}><path d="M0 8 12 .5 24 8v4H0z" fill="#0a5cb4" /><path d="M0 8l12 7.500L24 8v15H0z" fill="#27b1ef" /><path d="M24 8v15L11 15z" fill="#5cd0fa" /><path d="M2 8h20l-10 7z" fill="#f3f3f3" /></Svg>
      </TaskButton>
      <TaskButton open>
        <Svg w={24} h={25}><g stroke="#d9214a"><ellipse cx="12" cy="12.500" rx="11" ry="11.500" strokeWidth="1.500" /><ellipse cx="12" cy="12.500" rx="6" ry="9.500" strokeWidth="1.500" /><path d="M8 2.500C3 5 2 9 2 12.500s1 7.500 6 10M13.500 4c4 5 4 12 0 17" strokeWidth="1.200" /></g></Svg>
      </TaskButton>
      <TaskButton open active>
        <Svg w={24} h={24}><circle cx="13" cy="12" r="11" fill="#d35230" /><path d="M13 1A11 11 0 0 0 2 12h11z" fill="#ed6c47" /><path d="M13 1v11h11A11 11 0 0 0 13 1z" fill="#ff8f6b" /><OfficeTile tile="#c43e1c" letter="P" /></Svg>
      </TaskButton>
      <TaskButton open>
        <Svg w={24} h={24}><path d="M6 1h18v22H6z" fill="#107c41" /><path d="M6 1h9v7H6z" fill="#21a366" /><path d="M15 1h9v7h-9z" fill="#33c481" /><path d="M15 8h9v5h-9z" fill="#21a366" /><path d="M6 17h18v6H6z" fill="#185c37" /><path d="M15 13h9v5h-9z" fill="#107c41" /><OfficeTile tile="#107c41" letter="X" /></Svg>
      </TaskButton>
      <TaskButton open>
        <Svg w={24} h={25}><path d="M17.500 18 2.500 6.500.500 8.500 17 24.500z" fill="#0a7fd0" /><path d="M17.500 7 2.500 18.500l-2-2L17 .5z" fill="#0a6fbd" /><path d="M17 0l6.500 3v19L17 25z" fill="#26a4f0" /></Svg>
      </TaskButton>
      <TaskButton open>
        <Svg w={24} h={24}><path d="M5 1h19v6H5z" fill="#41a5ee" /><path d="M5 7h19v5.500H5z" fill="#2b7cd3" /><path d="M5 12.500h19V18H5z" fill="#185abd" /><path d="M5 18h19v5H5z" fill="#103f91" /><OfficeTile tile="#185abd" letter="W" /></Svg>
      </TaskButton>
    </div>
    <div className="ml-auto flex h-full items-center">
      <Svg w={24} h={25}>
        <circle cx="6" cy="6" r="5.700" fill="#f26a21" /><path d="M6 2.500v4.500M6 8.200v1.500" stroke="#222" strokeWidth="1.600" />
        <path d="M10.500 11.500H19l3.500 5" stroke="#f26a21" strokeWidth="2.200" /><path d="M6 15.500h16l2 2v5h-3v2h-3v-2h-8v2H7v-2H4v-5z" fill="#f26a21" /><path d="M6 18.500h3M18 18.500h3" stroke="#222" strokeWidth="1.500" />
      </Svg>
      <span className="ml-[8px] w-[169px] whitespace-nowrap text-[14px] tracking-[-0.36px]">Construção no(a) Pon...</span>
      <Svg w={12} h={7}><path d="m.5 6.500 5.500-5.500 5.500 5.500" stroke="#fff" strokeWidth="1.200" /></Svg>
      <Svg w={17} h={15} className="ml-[10px]"><path d="M5.500 2.500h10.800v8H3.500M3.500 5.500v5M.500.500h4v4h-4zM2.500 4.500v6M10 10.500v3.500M6.500 14h7" stroke="#fff" /></Svg>
      <Svg w={17} h={14} className="ml-[7px]"><path d="M.6 4.500H3L6.500 1v12L3 9.500H.6zM8.500 5c1 1 1 3 0 4M11 3c2 2 2 6 0 8M13.500 1c3 3 3 9 0 12" stroke="#fff" /></Svg>
      <div className="ml-[8px] flex w-[26px] flex-col items-center text-[12px] leading-[17px]">
        <span className="tracking-[-0.2px]">POR</span><span className="tracking-[-0.5px]">PTB2</span>
      </div>
      <div className="ml-[11px] flex w-[58px] flex-col items-center text-[12px] leading-[17px]">
        <span className="tracking-[-0.7px]">17:11</span><span className="tracking-[-0.5px]">12/04/2024</span>
      </div>
      <Svg w={17} h={17} className="ml-[18px]"><path d="M.6.600h15.800v12H11L8.500 15.500 6 12.600H.6z" stroke="#fff" strokeWidth="1.200" /></Svg>
      <div className="ml-[19px] mr-[4px] h-full w-px bg-[#6b6b6b]" />
    </div>
  </div>
);

export default function App() {
  return (
    <div className="flex h-[900px] w-[1600px] flex-col overflow-hidden font-['Open_Sans','Noto_Sans',sans-serif]">
      <TitleBar />
      <TabBar />
      <Ribbon />
      <Workspace />
      <StatusBar />
      <Taskbar />
    </div>
  );
}
